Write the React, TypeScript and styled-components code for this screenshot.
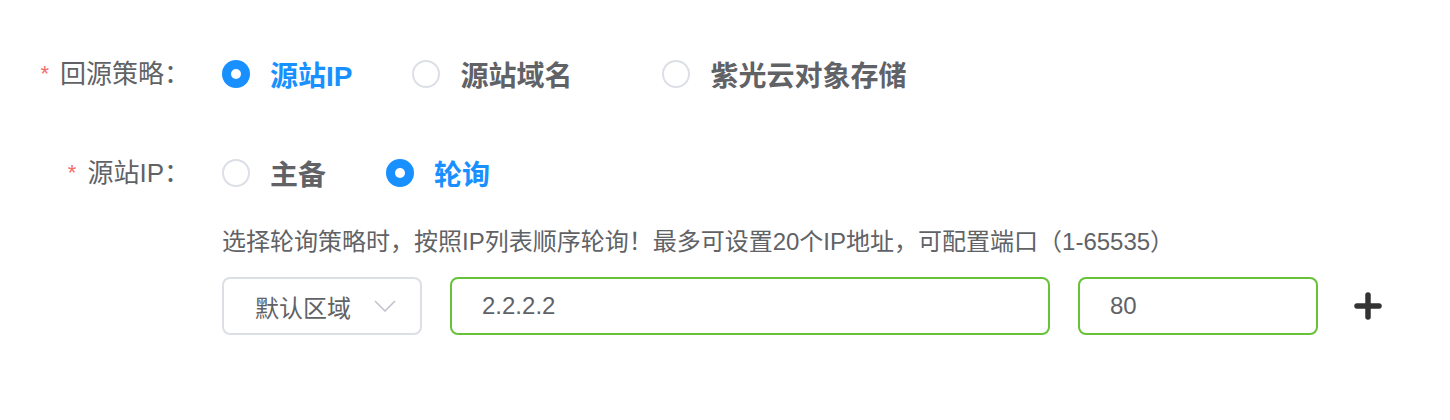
import React, { useState } from 'react';
import styled, { createGlobalStyle } from 'styled-components';

const GlobalStyle = createGlobalStyle`
  html, body {
    margin: 0;
    padding: 0;
    background: #ffffff;
  }
  body {
    font-family: "Liberation Sans", "Noto Sans CJK SC", sans-serif;
    color: #606266;
  }
`;

const Form = styled.div`
  padding-top: 44px;
`;

const FormItem = styled.div<{ gapTop?: number }>`
  display: flex;
  align-items: flex-start;
  margin-top: ${({ gapTop }) => gapTop ?? 0}px;
`;

const Label = styled.label`
  width: 190px;
  flex: none;
  height: 60px;
  line-height: 60px;
  text-align: right;
  font-size: 26px;
  color: #606266;
  white-space: nowrap;
`;

const Required = styled.span`
  color: #f56c6c;
  font-size: 22px;
  margin-right: 11px;
  vertical-align: 2px;
`;

const Content = styled.div`
  margin-left: 32px;
  display: flex;
  flex-direction: column;
`;

const RadioGroup = styled.div`
  display: flex;
  align-items: center;
  height: 60px;
`;

const RadioOption = styled.label<{ trail: number }>`
  display: flex;
  align-items: center;
  margin-right: ${({ trail }) => trail}px;
  cursor: pointer;
`;

const RadioCircle = styled.span<{ checked: boolean }>`
  width: 28px;
  height: 28px;
  box-sizing: border-box;
  border-radius: 50%;
  border: 2px solid ${({ checked }) => (checked ? '#1890ff' : '#dcdfe6')};
  background: ${({ checked }) => (checked ? '#1890ff' : '#fff')};
  display: flex;
  align-items: center;
  justify-content: center;

  &::after {
    content: '';
    width: 10px;
    height: 10px;
    border-radius: 50%;
    background: #fff;
    display: ${({ checked }) => (checked ? 'block' : 'none')};
  }
`;

const RadioText = styled.span<{ checked: boolean }>`
  margin-left: 20px;
  font-size: 28px;
  font-weight: 700;
  color: ${({ checked }) => (checked ? '#1890ff' : '#606266')};
  white-space: nowrap;
`;

const Tip = styled.div`
  margin-top: 21px;
  font-size: 24px;
  line-height: 36px;
  color: #606266;
  white-space: nowrap;
`;

const InputRow = styled.div`
  margin-top: 17px;
  display: flex;
  align-items: center;
`;

const Select = styled.div`
  width: 200px;
  height: 58px;
  box-sizing: border-box;
  border: 2px solid #dcdfe6;
  border-radius: 8px;
  display: flex;
  align-items: center;
  justify-content: space-between;
  padding: 0 24px 0 31px;
  font-size: 24px;
  color: #606266;
`;

const Input = styled.div<{ width: number }>`
  width: ${({ width }) => width}px;
  height: 58px;
  box-sizing: border-box;
  margin-left: 28px;
  border: 2px solid #67c23a;
  border-radius: 8px;
  display: flex;
  align-items: center;
  padding-left: 30px;
  font-size: 24px;
  color: #606266;
`;

const AddButton = styled.button`
  margin-left: 36px;
  width: 28px;
  height: 28px;
  padding: 0;
  border: none;
  background: none;
  display: flex;
  align-items: center;
  justify-content: center;
  cursor: pointer;
`;

type Opt = { label: string; trail: number };

const Radios = ({ options, value, onChange }: { options: Opt[]; value: string; onChange: (v: string) => void }) => (
  <RadioGroup>
    {options.map(o => (
      <RadioOption key={o.label} trail={o.trail} onClick={() => onChange(o.label)}>
        <RadioCircle checked={value === o.label} />
        <RadioText checked={value === o.label}>{o.label}</RadioText>
      </RadioOption>
    ))}
  </RadioGroup>
);

export default function App() {
  const [origin, setOrigin] = useState('源站IP');
  const [mode, setMode] = useState('轮询');

  return (
    <>
      <GlobalStyle />
      <Form>
        <FormItem>
          <Label><Required>*</Required>回源策略：</Label>
          <Content>
            <Radios
              value={origin}
              onChange={setOrigin}
              options={[
                { label: '源站IP', trail: 60 },
                { label: '源站域名', trail: 90 },
                { label: '紫光云对象存储', trail: 0 },
              ]}
            />
          </Content>
        </FormItem>
        <FormItem gapTop={39}>
          <Label><Required>*</Required>源站IP：</Label>
          <Content>
            <Radios
              value={mode}
              onChange={setMode}
              options={[
                { label: '主备', trail: 60 },
                { label: '轮询', trail: 0 },
              ]}
            />
            <Tip>选择轮询策略时，按照IP列表顺序轮询！最多可设置20个IP地址，可配置端口（1-65535）</Tip>
            <InputRow>
              <Select>
                默认区域
                <svg width="22" height="12" viewBox="0 0 22 12">
                  <path d="M1 1 L11 11 L21 1" fill="none" stroke="#c0c4cc" strokeWidth="1.6" />
                </svg>
              </Select>
              <Input width={600}>2.2.2.2</Input>
              <Input width={240}>80</Input>
              <AddButton aria-label="add">
                <svg width="28" height="28" viewBox="0 0 28 28">
                  <path d="M14 3 V25 M3 14 H25" stroke="#333" strokeWidth="5.5" strokeLinecap="round" />
                </svg>
              </AddButton>
            </InputRow>
          </Content>
        </FormItem>
      </Form>
    </>
  );
}
